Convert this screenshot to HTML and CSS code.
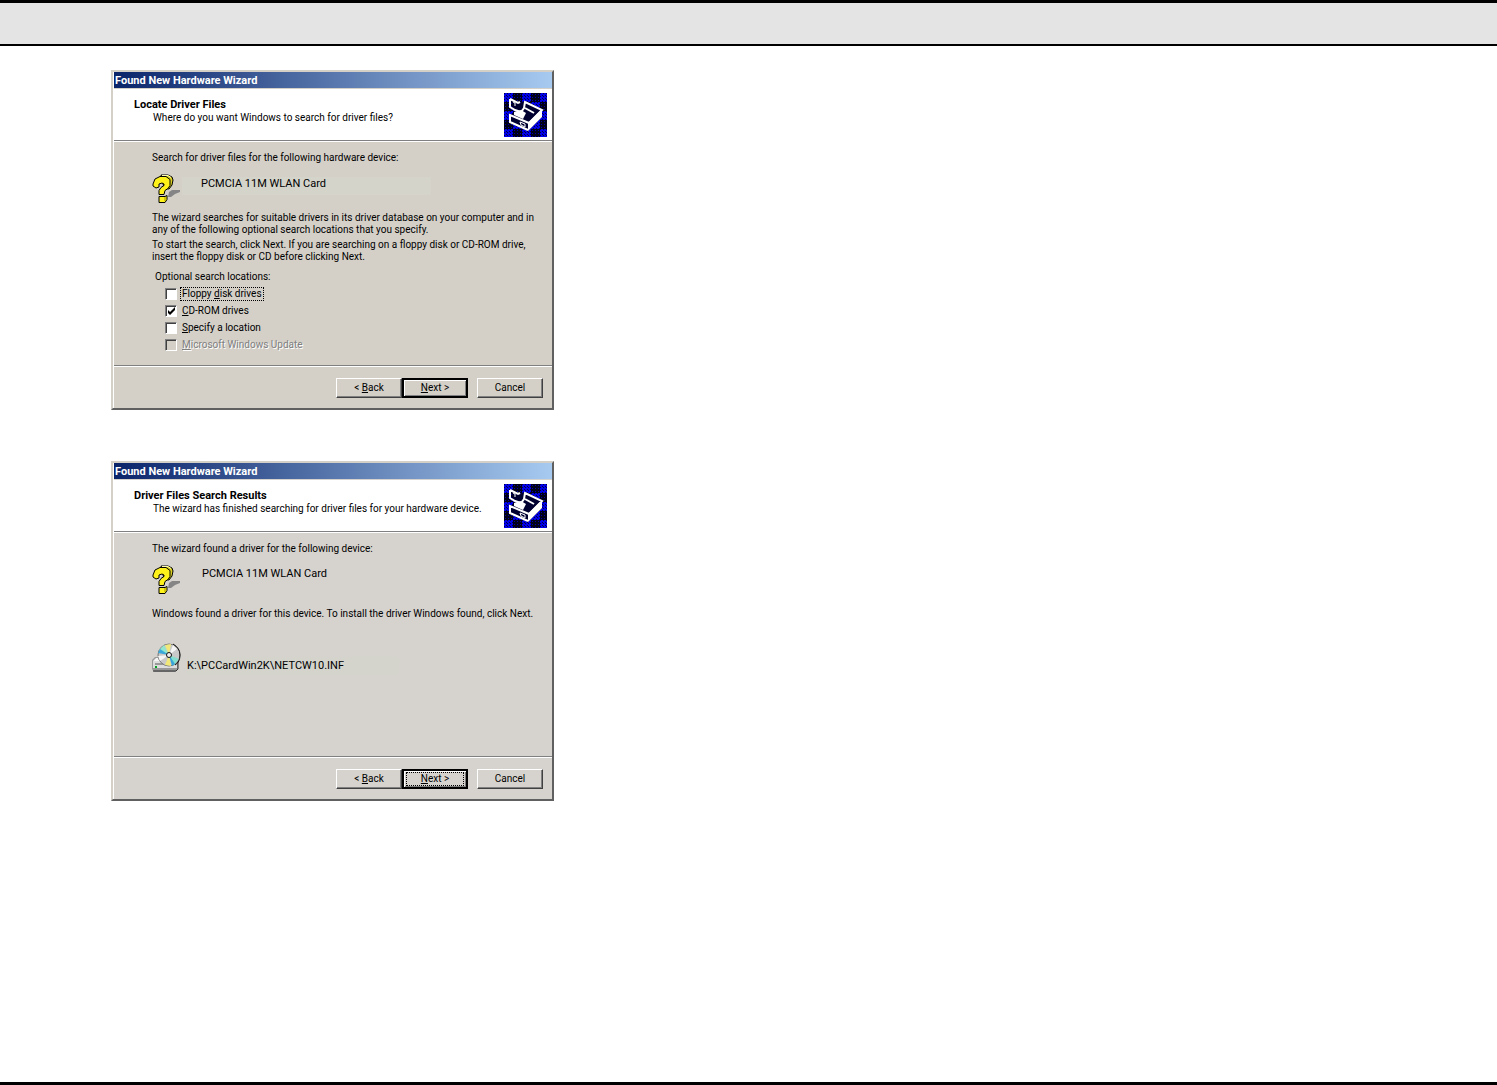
FILE: index.html
```html
<!DOCTYPE html>
<html lang="en">
<head>
<meta charset="utf-8">
<title>Found New Hardware Wizard</title>
<link rel="stylesheet" href="styles.css">
</head>
<body>
<svg class="sprite" aria-hidden="true">
  <defs>
    <pattern id="dots" width="3" height="3" patternUnits="userSpaceOnUse">
      <rect width="3" height="3" fill="#0000e8"/><path d="M0 0h1v1h-1zM2 2h1v1h-1z" fill="#000040"/>
    </pattern>
    <pattern id="dots-dark" width="3" height="3" patternUnits="userSpaceOnUse">
      <rect width="3" height="3" fill="#000018"/><rect x="1" y="1" width="1" height="1" fill="#0000b0"/>
    </pattern>
    <pattern id="checks" width="18" height="18" patternUnits="userSpaceOnUse">
      <rect width="18" height="18" fill="url(#dots-dark)"/>
      <path d="M0 0h9v9h-9zM9 9h9v9h-9z" fill="url(#dots)"/>
    </pattern>
  </defs>
  <symbol id="drawer" viewBox="0 0 43 44">
    <rect width="43" height="44" fill="url(#checks)"/>
    <path d="M6 6l8 4 7-2 17 8v8L24 38 6 30v-8l5-3z" fill="#000030"/>
    <path d="M6 6l8 4 2-1M6 6v8l5 3 6 2 3-4 1-6 17 8-13 13L6 22v7l18 8" fill="none" stroke="#fff" stroke-width="2"/>
    <path d="M10 19l7-2 5 3-3 6-9-4z" fill="#fff"/>
    <path d="M24 30l14-14v8L24 38z" fill="#fff"/>
    <path d="M21 15l9 5" stroke="#fff" stroke-width="2"/>
    <path d="M16 29l5 2v3l-4-2zM9 9l2 1v3" stroke="#fff" fill="none"/>
  </symbol>
  <symbol id="question" viewBox="0 0 28 29">
    <path d="M17 18l3-2h8v2l-5 2-4 3h-3z" fill="#858585"/>
    <path d="M9 1h7l4 2 1 3-1 5-3 4-5-1z" fill="#d8ce20" stroke="#000"/>
    <path d="M10 1.500h6l3 2" stroke="#fffbb0" fill="none"/>
    <path d="M1 10L3 5l5-2.500h6l4 3v6l-2 3-3 2-1 4H7v-4l2-3 3-2V10l-2-1-3 1v3l-3 1-3-2z" fill="#fff21a" stroke="#000"/>
    <path d="M7 22.500h6l2-1v4l-2 3H7z" fill="#fff21a" stroke="#000"/>
    <path d="M13 23v4" stroke="#a39600"/>
  </symbol>
  <symbol id="disc-drive" viewBox="0 0 29 30">
    <path d="M0 17l3-3h20l3 2v10l-3 3H2l-2-3z" fill="#999"/>
    <path d="M1 18h24v7H1z" fill="#ddd"/><path d="M1 18l3-3h19l2 3z" fill="#f4f4f4"/>
    <path d="M1 28h23l2-2V17" stroke="#333" fill="none"/>
    <path d="M3 21h11" stroke="#555"/><path d="M3 24h2" stroke="#00a020" stroke-width="2"/>
    <circle cx="17" cy="12" r="11" fill="#c9c9c9" stroke="#777"/>
    <path d="M17 12L13 2l6-1z" fill="#f2e878"/><path d="M17 12L7 7l5-5z" fill="#92e6cd"/>
    <path d="M17 12L6 10l2-4z" fill="#39a9dc"/><path d="M17 12l-4 10 6 1z" fill="#f2e878"/>
    <path d="M17 12l10 4-5 6z" fill="#83dfce"/><path d="M17 12l6 9-3 2z" fill="#38a5d8"/>
    <path d="M17 12l4-10 4 4zM17 12L6 13l2 5z" fill="#f5f5f5"/>
    <path d="M21 1q7 4 7 11t-5 10" fill="none" stroke="#111"/>
    <circle cx="17" cy="12" r="2.500" fill="#eee" stroke="#111"/>
  </symbol>
</svg>

<header class="page-bar"></header>
<main class="page">
  <section class="dialog" aria-labelledby="t1">
    <h2 class="title" id="t1">Found New Hardware Wizard</h2>
    <div class="banner">
      <div class="banner-text">
        <h3>Locate Driver Files</h3>
        <p>Where do you want Windows to search for driver files?</p>
      </div>
      <svg class="drawer"><use href="#drawer"/></svg>
    </div>
    <form class="body">
      <p>Search for driver files for the following hardware device:</p>
      <div class="device">
        <svg class="question"><use href="#question"/></svg>
        <span class="device-name">PCMCIA 11M WLAN Card</span>
      </div>
      <p>The wizard searches for suitable drivers in its driver database on your computer and in<br>any of the following optional search locations that you specify.</p>
      <p class="follow">To start the search, click Next. If you are searching on a floppy disk or CD-ROM drive,<br>insert the floppy disk or CD before clicking Next.</p>
      <fieldset class="options">
        <legend>Optional search locations:</legend>
        <label><input type="checkbox"><span class="focused">Floppy <u>d</u>isk drives</span></label>
        <label><input type="checkbox" checked><span><u>C</u>D-ROM drives</span></label>
        <label><input type="checkbox"><span><u>S</u>pecify a location</span></label>
        <label class="off"><input type="checkbox" disabled><span><u>M</u>icrosoft Windows Update</span></label>
      </fieldset>
    </form>
    <div class="actions">
      <button type="button">&lt; <u>B</u>ack</button>
      <button type="button" class="default"><span><u>N</u>ext &gt;</span></button>
      <button type="button" class="cancel">Cancel</button>
    </div>
  </section>

  <section class="dialog results" aria-labelledby="t2">
    <h2 class="title" id="t2">Found New Hardware Wizard</h2>
    <div class="banner">
      <div class="banner-text">
        <h3>Driver Files Search Results</h3>
        <p>The wizard has finished searching for driver files for your hardware device.</p>
      </div>
      <svg class="drawer"><use href="#drawer"/></svg>
    </div>
    <div class="body">
      <p>The wizard found a driver for the following device:</p>
      <div class="device">
        <svg class="question"><use href="#question"/></svg>
        <span class="device-name">PCMCIA 11M WLAN Card</span>
      </div>
      <p>Windows found a driver for this device. To install the driver Windows found, click Next.</p>
      <div class="driver">
        <svg class="disc"><use href="#disc-drive"/></svg>
        <span class="path">K:\PCCardWin2K\NETCW10.INF</span>
      </div>
    </div>
    <div class="actions">
      <button type="button">&lt; <u>B</u>ack</button>
      <button type="button" class="default"><span class="focused"><u>N</u>ext &gt;</span></button>
      <button type="button" class="cancel">Cancel</button>
    </div>
  </section>
</main>
</body>
</html>
```

FILE: styles.css
```css
* { box-sizing: border-box; }
body {
  margin: 0;
  min-height: 100vh;
  display: flex;
  flex-direction: column;
  background: #fff;
  color: #000;
  border-bottom: 3px solid #000;
  font: 10px/12px Roboto, sans-serif;
}
h2, h3, p { margin: 0; }
svg { flex: none; }
.sprite { position: absolute; width: 0; height: 0; }
.page-bar {
  height: 46px;
  background: #e4e4e4;
  border-top: 3px solid #000;
  border-bottom: 2px solid #000;
}
.page {
  flex: 1;
  display: flex;
  flex-direction: column;
  gap: 51px;
  padding: 24px 24px 24px 111px;
}
.dialog {
  --face: #d4d0c8;
  width: 100%;
  max-width: 443px;
  min-height: 340px;
  display: flex;
  flex-direction: column;
  padding-left: 1px;
  background: var(--face);
  border: 2px solid;
  border-color: #d4d0c8 #606060 #606060 #d4d0c8;
  box-shadow: inset 1px 0 #fff;
}
.results { --face: #d6d3ce; }
.title {
  height: 16px;
  padding-left: 1px;
  font-size: 11px;
  line-height: 17px;
  color: #fff;
  background: linear-gradient(90deg, #0a246a, #a6caf0);
}
.banner {
  display: flex;
  justify-content: space-between;
  height: 53px;
  margin-top: 1px;
  padding: 4px 5px 0 20px;
  background: #fff;
  border-bottom: 1px solid #fff;
  box-shadow: inset 0 -1px #808080;
}
.banner-text { padding-top: 5px; }
.banner h3 { font-size: 11px; line-height: 13px; }
.banner p { padding-left: 19px; line-height: 14px; }
.drawer { width: 43px; height: 44px; }
.body { flex: 1; padding: 10px 10px 10px 38px; }
.device { display: flex; gap: 2px; margin: 10px 0 9px; }
.question { width: 28px; height: 29px; }
.device-name {
  width: 249px;
  height: 18px;
  margin-top: 3px;
  padding-left: 19px;
  font-size: 11px;
  line-height: 14px;
  background: #d4d4cb;
}
.follow { margin-top: 3px; }
.options { margin: 8px 0 0; padding: 0 0 0 13px; border: 0; }
.options legend { margin: 0 0 2px -10px; padding: 0; }
.options label { display: flex; align-items: center; gap: 4px; height: 17px; }
.options span { padding: 0 1px; }
.options .focused { outline: 1px dotted #000; }
input {
  appearance: none;
  width: 12px;
  height: 12px;
  margin: 0;
  background: #fff;
  border: 1px solid;
  border-color: #808080 #fff #fff #808080;
  box-shadow: inset 1px 1px #404040;
}
input:checked {
  background: #fff url("data:image/svg+xml,%3Csvg xmlns='http://www.w3.org/2000/svg' viewBox='0 0 10 10'%3E%3Cpath d='M2 4v3l2 2 5-5V1L4 6z'/%3E%3C/svg%3E");
}
input:disabled { background: var(--face); }
.off { color: #808080; text-shadow: 1px 1px #fff; }
.actions {
  display: flex;
  justify-content: flex-end;
  padding: 12px 9px 10px;
  border-top: 1px solid #808080;
  box-shadow: inset 0 1px #fff;
}
button {
  width: 66px;
  height: 20px;
  padding: 0;
  font: inherit;
  color: #000;
  background: var(--face);
  border: 1px solid;
  border-color: #fff #404040 #404040 #fff;
  box-shadow: inset -1px -1px #808080;
}
.default { border: 2px solid #000; box-shadow: inset 1px 1px #fff, inset -1px -1px #808080; }
.default span { display: block; margin: 0 3px; }
.default .focused { outline: 1px dotted #000; }
.cancel { margin-left: 9px; }
.results .device-name { background: none; padding-left: 20px; line-height: 12px; }
.results .device { margin-bottom: 14px; }
.driver { display: flex; gap: 6px; margin-top: 23px; }
.disc { width: 29px; height: 30px; }
.path {
  width: 212px;
  height: 18px;
  margin-top: 14px;
  font-size: 11px;
  line-height: 18px;
  background: #d4d4cd;
}
```
